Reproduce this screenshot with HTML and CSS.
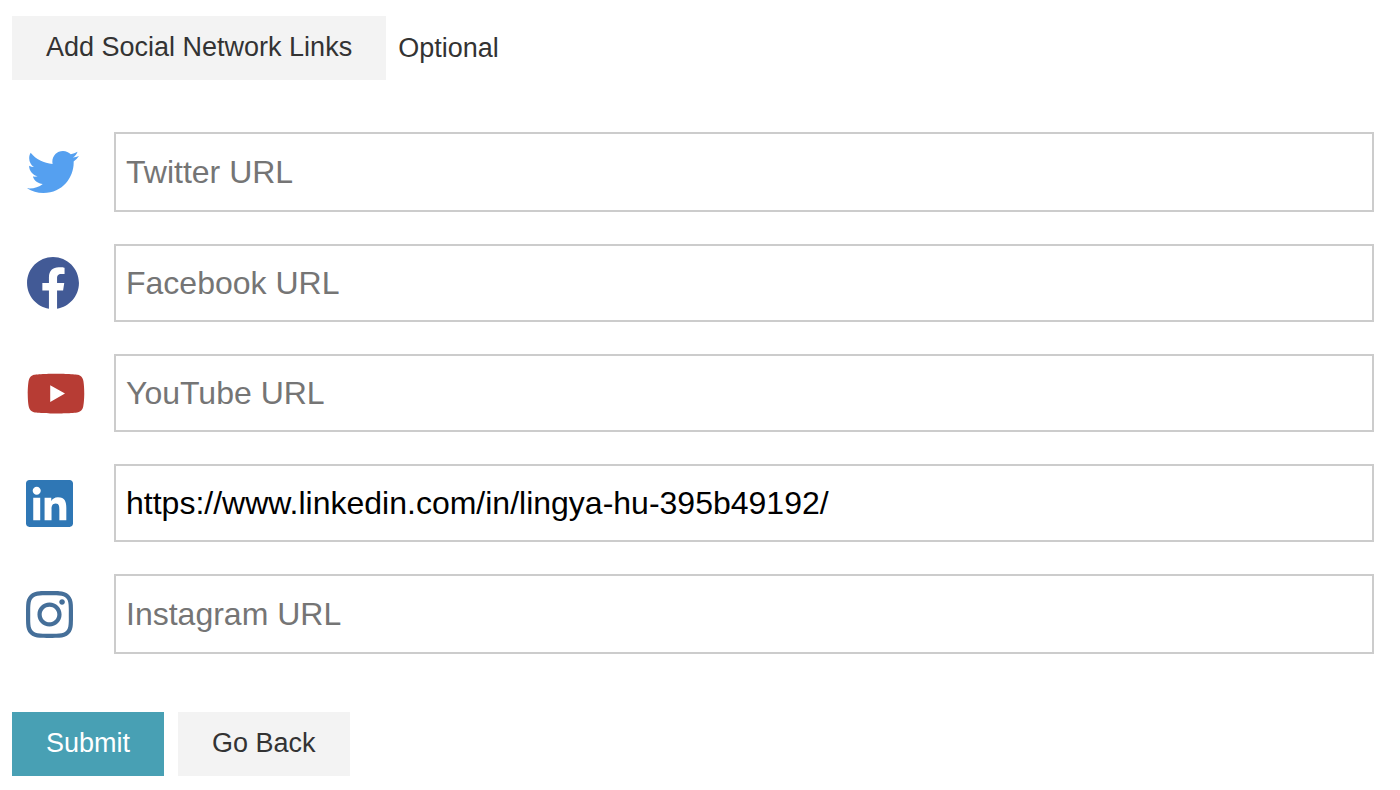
FILE: index.html
```html
<!DOCTYPE html>
<html lang="en">
<head>
<meta charset="utf-8">
<meta name="viewport" content="width=device-width, initial-scale=1">
<title>Social Network Links</title>
<link rel="stylesheet" href="styles.css">
</head>
<body>
<form class="social-form">
  <div class="toolbar">
    <button class="button" type="button">Add Social Network Links</button>
    <span class="hint">Optional</span>
  </div>
  <div class="fields">
    <div class="field">
      <label class="icon twitter" for="twitter" aria-label="Twitter URL"><svg width="54" height="52" viewBox="-10 0 532 512"><path d="M459.37 151.716c.325 4.548.325 9.097.325 13.645 0 138.72-105.583 298.558-298.558 298.558-59.452 0-114.68-17.219-161.137-47.106 8.447.974 16.568 1.299 25.34 1.299 49.055 0 94.213-16.568 130.274-44.832-46.132-.975-84.792-31.188-98.112-72.772 6.498.974 12.995 1.624 19.818 1.624 9.421 0 18.843-1.3 27.614-3.573-48.081-9.747-84.143-51.98-84.143-102.985v-1.299c13.969 7.797 30.214 12.67 47.431 13.319-28.264-18.843-46.781-51.005-46.781-87.391 0-19.492 5.197-37.36 14.294-52.954 51.655 63.675 129.3 105.258 216.365 109.807-1.624-7.797-2.599-15.918-2.599-24.04 0-57.828 46.782-104.934 104.934-104.934 30.213 0 57.502 12.67 76.67 33.137 23.715-4.548 46.456-13.32 66.599-25.34-7.798 24.366-24.366 44.833-46.132 57.827 21.117-2.273 41.584-8.122 60.426-16.243-14.292 20.791-32.161 39.308-52.628 54.253z"/></svg></label>
      <input class="url" id="twitter" type="text" placeholder="Twitter URL">
    </div>
    <div class="field">
      <label class="icon facebook" for="facebook" aria-label="Facebook URL"><svg width="54" height="52" viewBox="-2 8 516 496"><path d="M504 256C504 119 393 8 256 8S8 119 8 256c0 123.78 90.69 226.38 209.25 245V327.69h-63V256h63v-54.64c0-62.15 37-96.48 93.67-96.48 27.14 0 55.52 4.84 55.52 4.84v61h-31.28c-30.8 0-40.41 19.12-40.41 38.73V256h68.78l-11 71.69h-57.78V501C413.31 482.38 504 379.78 504 256z"/></svg></label>
      <input class="url" id="facebook" type="text" placeholder="Facebook URL">
    </div>
    <div class="field">
      <label class="icon youtube" for="youtube" aria-label="YouTube URL"><svg width="60" height="53" viewBox="0 0 576 512"><path d="M549.655 124.083c-6.281-23.65-24.787-42.276-48.284-48.597C458.781 64 288 64 288 64S117.22 64 74.629 75.486c-23.497 6.322-42.003 24.947-48.284 48.597-11.412 42.867-11.412 132.305-11.412 132.305s0 89.438 11.412 132.305c6.281 23.65 24.787 41.5 48.284 47.821C117.22 448 288 448 288 448s170.78 0 213.371-11.486c23.497-6.321 42.003-24.171 48.284-47.821 11.412-42.867 11.412-132.305 11.412-132.305s0-89.438-11.412-132.305zm-317.51 213.508V175.185l142.739 81.205-142.739 81.201z"/></svg></label>
      <input class="url" id="youtube" type="text" placeholder="YouTube URL">
    </div>
    <div class="field">
      <label class="icon linkedin" for="linkedin" aria-label="LinkedIn URL"><svg width="47" height="47" viewBox="0 32 448 448"><path d="M416 32H31.9C14.3 32 0 46.5 0 64.3v383.4C0 465.5 14.3 480 31.9 480H416c17.6 0 32-14.5 32-32.3V64.3c0-17.8-14.4-32.3-32-32.3zM135.4 416H69V202.2h66.5V416zm-33.2-243c-21.3 0-38.5-17.3-38.5-38.5S80.9 96 102.2 96c21.2 0 38.5 17.3 38.5 38.5 0 21.3-17.2 38.5-38.5 38.5zm282.1 243h-66.4V312c0-24.8-.5-56.7-34.5-56.7-34.6 0-39.9 27-39.9 54.9V416h-66.4V202.2h63.7v29.2h.9c8.9-16.8 30.6-34.5 62.9-34.5 67.2 0 79.7 44.3 79.7 101.9V416z"/></svg></label>
      <input class="url" id="linkedin" type="text" value="https://www.linkedin.com/in/lingya-hu-395b49192/">
    </div>
    <div class="field">
      <label class="icon instagram" for="instagram" aria-label="Instagram URL"><svg width="47" height="47" viewBox="0 32 448 448"><path d="M224.1 141c-63.6 0-114.9 51.3-114.9 114.9s51.3 114.9 114.9 114.9S339 319.5 339 255.900 287.700 141 224.100 141zm0 189.600c-41.100 0-74.700-33.500-74.700-74.700s33.500-74.700 74.700-74.700 74.700 33.500 74.700 74.700-33.600 74.700-74.700 74.700zm146.400-194.300c0 14.900-12 26.800-26.800 26.800-14.900 0-26.800-12-26.800-26.800s12-26.800 26.800-26.800 26.800 12 26.800 26.800zm76.100 27.200c-1.700-35.900-9.900-67.700-36.200-93.900-26.200-26.200-58-34.400-93.900-36.200-37-2.100-147.900-2.100-184.900 0-35.800 1.700-67.600 9.900-93.900 36.100s-34.400 58-36.200 93.900c-2.100 37-2.100 147.900 0 184.900 1.700 35.900 9.900 67.700 36.200 93.900s58 34.400 93.900 36.200c37 2.100 147.900 2.100 184.900 0 35.900-1.700 67.700-9.900 93.900-36.200 26.200-26.200 34.400-58 36.200-93.900 2.100-37 2.100-147.800 0-184.800zM398.800 388c-7.800 19.600-22.900 34.700-42.600 42.600-29.500 11.700-99.500 9-132.100 9s-102.700 2.600-132.100-9c-19.600-7.800-34.700-22.900-42.600-42.600-11.700-29.500-9-99.500-9-132.100s-2.600-102.700 9-132.100c7.800-19.600 22.900-34.700 42.600-42.600 29.500-11.700 99.500-9 132.100-9s102.700-2.600 132.100 9c19.600 7.800 34.700 22.900 42.600 42.600 11.700 29.500 9 99.500 9 132.100s2.700 102.700-9 132.100z"/></svg></label>
      <input class="url" id="instagram" type="text" placeholder="Instagram URL">
    </div>
  </div>
  <div class="actions">
    <button class="button primary" type="submit">Submit</button>
    <button class="button" type="button">Go Back</button>
  </div>
</form>
</body>
</html>
```
FILE: styles.css
```css
* {
  box-sizing: border-box;
}

body {
  margin: 0;
  background: #fff;
  color: #333;
  font-family: "Liberation Sans", Arial, sans-serif;
  font-size: 27px;
}

.social-form {
  padding: 16px 26px 14px 12px;
}

.toolbar {
  display: flex;
  align-items: center;
  gap: 12px;
}

.button {
  height: 64px;
  padding: 0 34px 2px;
  border: 0;
  background: #f3f3f3;
  color: #333;
  font: inherit;
}

.primary {
  background: #48a0b4;
  color: #fff;
}

.fields {
  display: grid;
  gap: 32px;
  padding: 52px 0 58px;
}

.field {
  display: grid;
  grid-template-columns: 88px 1fr;
  gap: 14px;
  align-items: center;
}

.icon {
  display: flex;
  padding-left: 14px;
}

.icon svg {
  fill: currentColor;
}

.twitter { color: #55a0f0; }
.facebook { color: #425a96; }
.youtube { color: #b73c34; }
.linkedin { color: #2f77b5; }
.instagram { color: #456f99; }

.url {
  width: 100%;
  min-width: 0;
  height: 78px;
  padding: 0 10px;
  border: 2px solid #ccc;
  border-radius: 0;
  background: #fff;
  color: #000;
  font: inherit;
  font-size: 32px;
}

.field:first-child .url,
.field:last-child .url {
  height: 80px;
}

.url::placeholder {
  color: #757575;
  opacity: 1;
}

.actions {
  display: flex;
  gap: 14px;
}
```
